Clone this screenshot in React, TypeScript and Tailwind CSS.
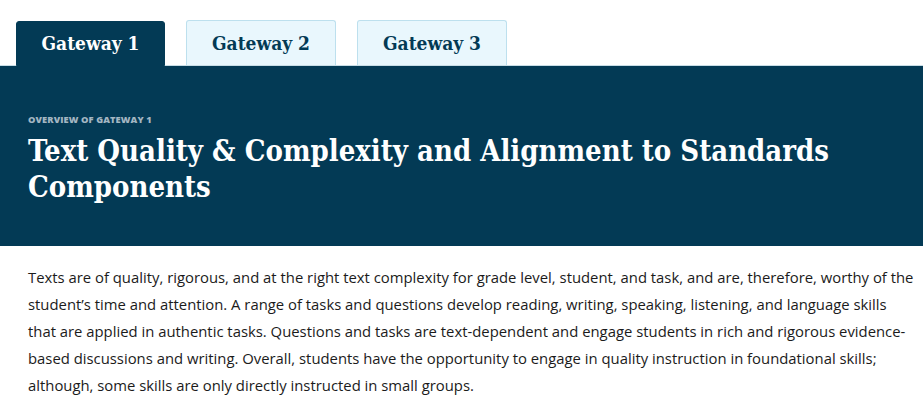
const tabs = ["Gateway 1", "Gateway 2", "Gateway 3"];

const slab = { fontFamily: '"DejaVu Serif Condensed", "DejaVu Serif", serif', fontStretch: "condensed" as const };

export default function App() {
  const active = 0;
  return (
    <div className="w-[923px] h-[413px] bg-white overflow-hidden">
      <div className="flex items-end gap-[21px] pl-4 pt-5 border-b border-[#c8dde6]">
        {tabs.map((t, i) => (
          <div
            key={t}
            className={
              i === active
                ? "w-[149px] h-[45px] flex items-center justify-center rounded-t-[3px] bg-[#033a55] text-white border border-[#033a55] -mb-px"
                : "w-[150px] h-[45px] flex items-center justify-center rounded-t-[3px] bg-[#e9f7fd] text-[#033a55] border border-b-0 border-[#bde0ee]"
            }
            style={slab}
          >
            <span className="text-[19px] font-bold">{t}</span>
          </div>
        ))}
      </div>
      <div className="bg-[#033a55] h-[180px] pl-[28px] pr-6 pt-[48px]">
        <div
          className="text-[9.3px] font-extrabold uppercase text-[#a3b6c2] leading-[12px] tracking-[0.1px]"
          style={{ fontFamily: '"Open Sans", sans-serif' }}
        >
          Overview of Gateway 1
        </div>
        <h1
          className="text-white text-[29px] font-bold leading-[36px] mt-[7px] max-w-[860px]"
          style={slab}
        >
          Text Quality &amp; Complexity and Alignment to Standards Components
        </h1>
      </div>
      <p
        className="pl-[28px] pr-[9px] pt-[18px] text-[14.85px] leading-[27px] text-[#1b1b1b]"
        style={{ fontFamily: '"Open Sans", sans-serif' }}
      >
        Texts are of quality, rigorous, and at the right text complexity for grade level, student, and task, and
        are, therefore, worthy of the student’s time and attention. A range of tasks and questions develop reading,
        writing, speaking, listening, and language skills that are applied in authentic tasks. Questions and tasks
        are text-dependent and engage students in rich and rigorous evidence-based discussions and writing.
        Overall, students have the opportunity to engage in quality instruction in foundational skills; although,
        some skills are only directly instructed in small groups.
      </p>
    </div>
  );
}
